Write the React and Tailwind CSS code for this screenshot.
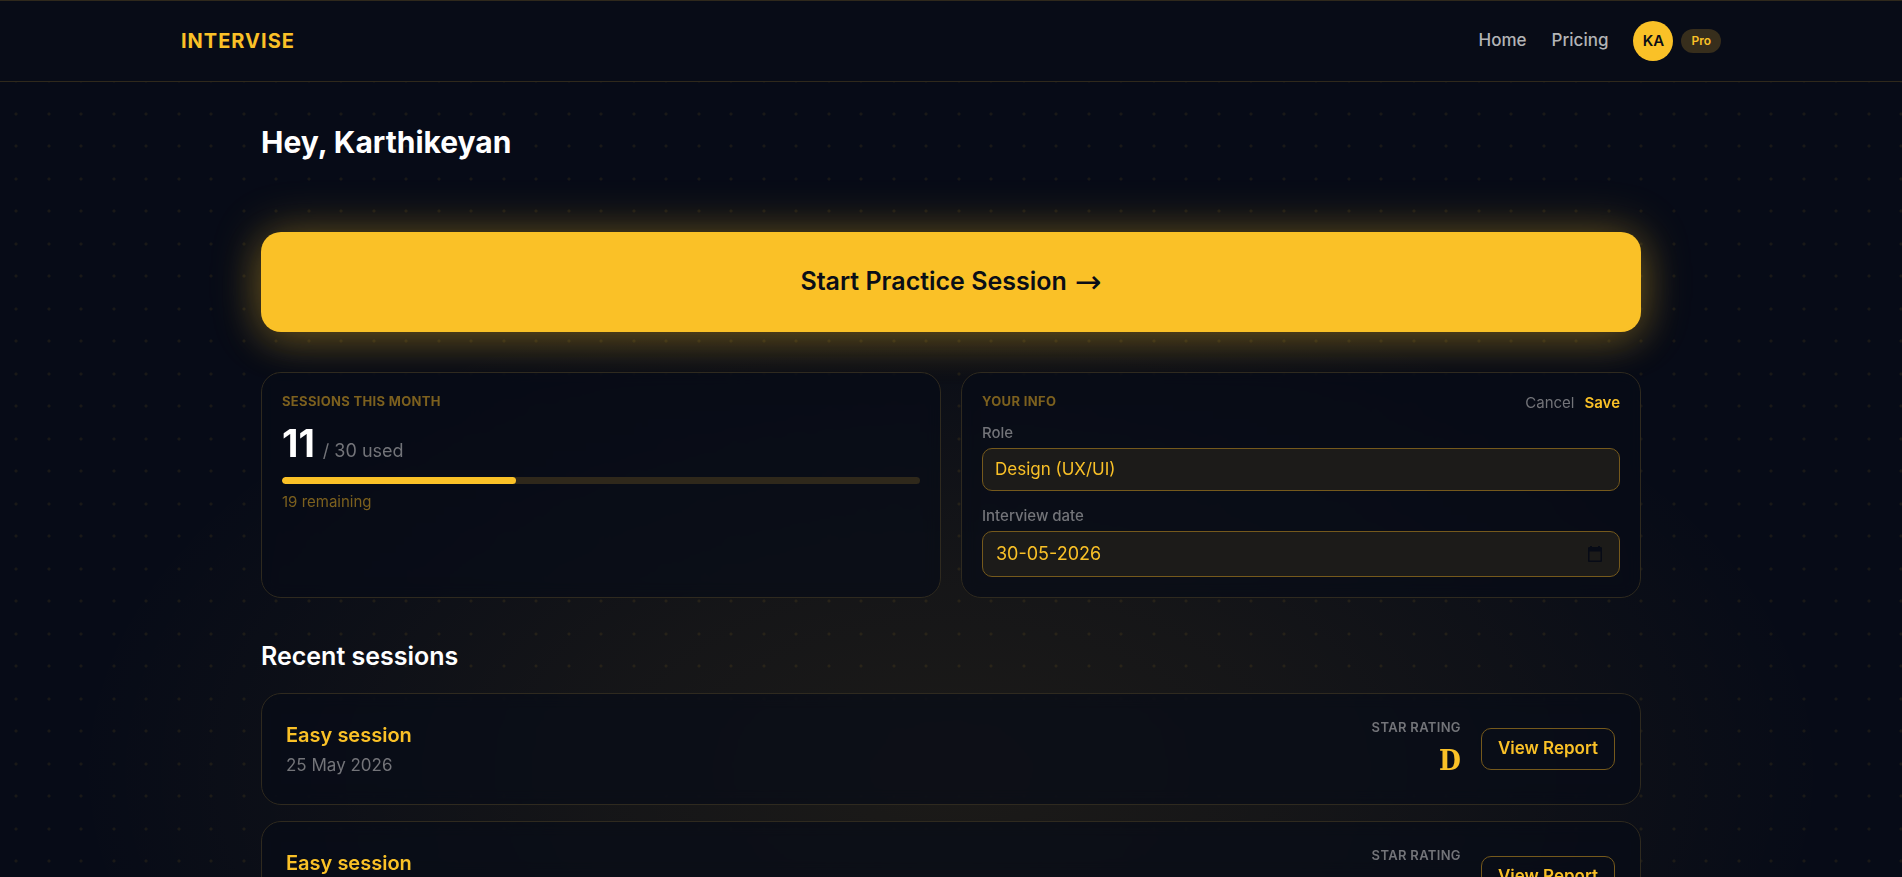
import { useState } from "react";

const sessions = [
  { id: 1, title: "Easy session", date: "25 May 2026", rating: "D" },
  { id: 2, title: "Easy session", date: "25 May 2026", rating: "D" },
];

const dots =
  "bg-[radial-gradient(circle_at_16px_16px,rgba(251,191,36,0.08)_1px,transparent_2px),radial-gradient(circle_at_49px_16px,rgba(251,191,36,0.08)_1px,transparent_2px),radial-gradient(circle_at_16px_49px,rgba(251,191,36,0.08)_1px,transparent_2px),radial-gradient(circle_at_49px_49px,rgba(251,191,36,0.08)_1px,transparent_2px)] bg-size-[65px_65px]";

function CalendarIcon() {
  return (
    <svg viewBox="0 0 14 16" className="h-4 w-3.5" aria-hidden="true">
      <path
        fill="#070b16"
        fillRule="evenodd"
        d="M2 0h2v1h6V0h2v1h.8c.7 0 1.2.6 1.200 1.300v12.400c0 .7-.5 1.300-1.200 1.300H1.200C.5 16 0 15.400 0 14.700V2.300C0 1.600.5 1 1.200 1H2zM1.500 5.500v9h11v-9z"
      />
    </svg>
  );
}

function Header() {
  return (
    <header className="border-y border-[#2f291c] bg-[#080c17]">
      <div className="mx-auto flex h-20 max-w-[1600px] items-center justify-between px-[30px]">
        <a href="#home" className="text-xl leading-7 font-bold tracking-wider text-[#fac127]">
          INTERVISE
        </a>
        <nav className="flex items-center gap-[25px] text-[17px] font-medium text-[#b3b4b6]">
          <a href="#home">Home</a>
          <a href="#pricing">Pricing</a>
          <div className="flex items-center gap-2">
            <button
              type="button"
              aria-label="Account"
              className="size-10 rounded-full bg-[#fac127] text-[15px] font-semibold text-[#0a0e17]"
            >
              KA
            </button>
            <span className="flex h-6 items-center rounded-full bg-[#372e1c] px-2.5 text-xs font-semibold text-[#fac127]">
              Pro
            </span>
          </div>
        </nav>
      </div>
    </header>
  );
}

function UsageCard() {
  const used = 11;
  const total = 30;
  return (
    <section className="rounded-[20px] border border-[#2f2a1f] bg-[#070b17]/70 px-5 py-5 backdrop-blur-sm">
      <h2 className="text-[13px] leading-4 font-bold tracking-wide text-[#7c601e]">SESSIONS THIS MONTH</h2>
      <p className="mt-3.5 flex items-baseline gap-2 leading-10">
        <span className="text-[38px] leading-10 font-bold text-white">{used}</span>
        <span className="text-lg leading-10 text-[#737479]">/ {total} used</span>
      </p>
      <div className="mt-1.5 h-[7px] overflow-hidden rounded-full bg-[#2f281b]">
        <div className="h-full rounded-full bg-[#fac127]" style={{ width: `${(used / total) * 100}%` }} />
      </div>
      <p className="mt-2 text-[15px] leading-5 text-[#7c601e]">{total - used} remaining</p>
    </section>
  );
}

function InfoCard() {
  const [role, setRole] = useState("Design (UX/UI)");
  const [date, setDate] = useState("30-05-2026");
  return (
    <section className="rounded-[20px] border border-[#2f2a1f] bg-[#070b17]/70 p-5 backdrop-blur-sm">
      <div className="flex items-start justify-between">
        <h2 className="text-[13px] leading-4 font-bold tracking-wide text-[#7c601e]">YOUR INFO</h2>
        <div className="flex gap-2.5 text-[15px] leading-5">
          <button type="button" className="text-[#737479]">Cancel</button>
          <button type="button" className="font-semibold text-[#fac127]">Save</button>
        </div>
      </div>
      <label htmlFor="role" className="mt-2.5 block text-[15px] leading-5 font-medium text-[#737479]">
        Role
      </label>
      <select
        id="role"
        value={role}
        onChange={(e) => setRole(e.target.value)}
        className="mt-[5px] block h-[43px] w-full appearance-none rounded-[10px] border border-[#75591c] bg-[#1c1b19] px-3 text-[17px] text-[#fac127] outline-none"
      >
        <option>Design (UX/UI)</option>
      </select>
      <label htmlFor="date" className="mt-[15px] block text-[15px] leading-5 font-medium text-[#737479]">
        Interview date
      </label>
      <div className="mt-[5px] flex h-[46px] items-center rounded-[10px] border border-[#75591c] bg-[#1c1b19] pr-[17px] pl-[13px]">
        <input
          id="date"
          type="text"
          value={date}
          onChange={(e) => setDate(e.target.value)}
          className="min-w-0 flex-1 bg-transparent text-lg text-[#fac127] outline-none"
        />
        <button type="button" aria-label="Choose date">
          <CalendarIcon />
        </button>
      </div>
    </section>
  );
}

function SessionRow({ session }) {
  return (
    <li className="flex items-center justify-between rounded-[20px] border border-[#2f2a1f] bg-[#070b17]/70 py-[23px] pr-[25px] pl-6 backdrop-blur-sm">
      <div>
        <h3 className="text-xl leading-8 font-semibold text-[#fac127]">{session.title}</h3>
        <p className="text-[17px] leading-7 text-[#737479]">{session.date}</p>
      </div>
      <div className="flex items-center gap-5">
        <div className="text-right">
          <p className="text-[13px] leading-5 font-semibold tracking-wide text-[#737479]">STAR RATING</p>
          <p className="mt-1 font-['DejaVu_Serif_Condensed','DejaVu_Serif',serif] text-[28px] leading-10 font-bold text-[#fac127]">
            {session.rating}
          </p>
        </div>
        <button
          type="button"
          className="h-[42px] rounded-[10px] border border-[#75591c] px-4 text-[17px] font-semibold text-[#fac127]"
        >
          View Report
        </button>
      </div>
    </li>
  );
}

export default function App() {
  return (
    <div className="h-screen overflow-hidden bg-[#070b17] bg-[radial-gradient(ellipse_880px_500px_at_50%_88%,rgba(251,191,36,0.085),rgba(251,191,36,0.06)_40%,transparent)] font-[Inter,sans-serif] text-white">
      <div className={`min-h-screen ${dots}`}>
        <Header />
        <main className="mx-auto max-w-[1440px] px-[30px] pt-10">
          <h1 className="text-3xl leading-10 font-bold">Hey, Karthikeyan</h1>
          <button
            type="button"
            className="mt-[70px] flex h-[100px] w-full items-center justify-center gap-2 rounded-[20px] bg-[#fac127] text-[25px] font-semibold text-[#0a0e17] shadow-[0_0_50px_rgba(251,191,36,0.3),0_10px_40px_rgba(251,191,36,0.2)]"
          >
            Start Practice Session
            <span className="font-['DejaVu_Sans',sans-serif] text-[32px] leading-8 font-normal">→</span>
          </button>
          <div className="mt-10 grid grid-cols-2 gap-5">
            <UsageCard />
            <InfoCard />
          </div>
          <h2 className="mt-10 text-[25px] leading-9 font-semibold">Recent sessions</h2>
          <ul className="mt-[19px] flex flex-col gap-4">
            {sessions.map((s) => (
              <SessionRow key={s.id} session={s} />
            ))}
          </ul>
        </main>
      </div>
    </div>
  );
}
